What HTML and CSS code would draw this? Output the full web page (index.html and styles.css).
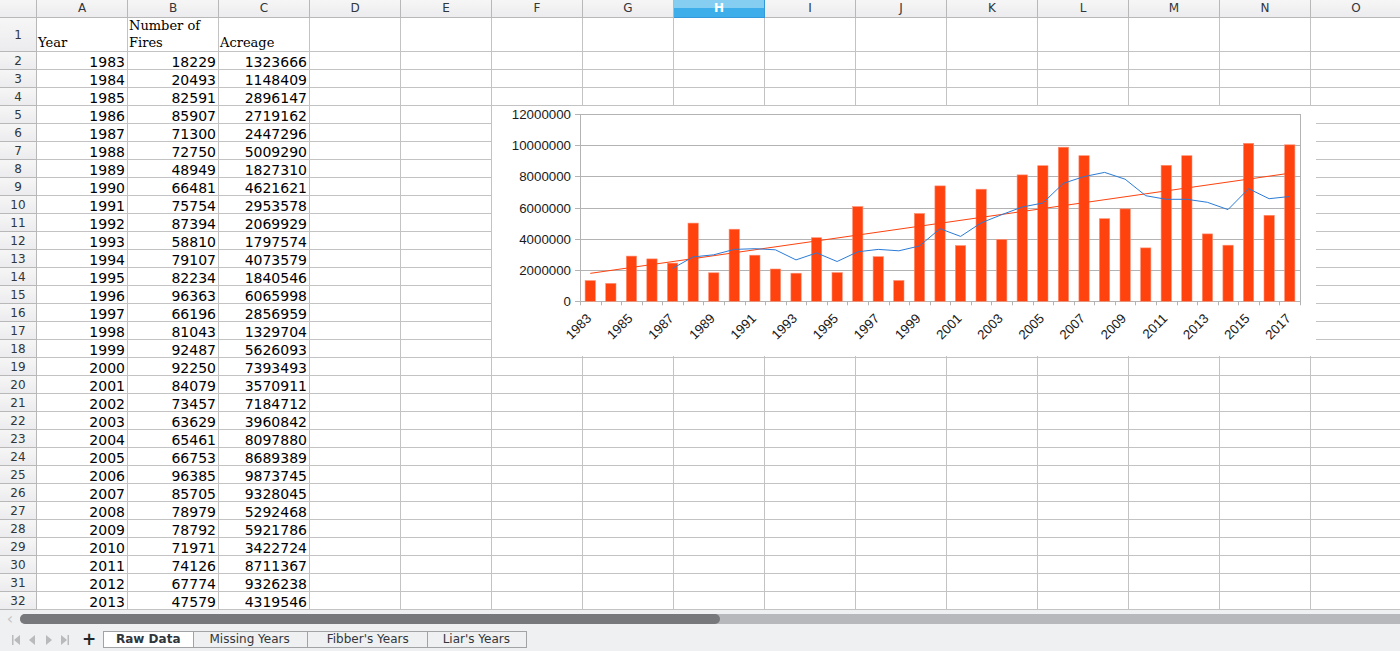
FILE: index.html
```html
<!DOCTYPE html>
<html>
<head>
	<title>Raw Data</title>
	<meta name="viewport" content="width=device-width, initial-scale=1">
	<link rel="stylesheet" href="styles.css">
</head>
<body>
	<div class="sheet">
		<div class="grid" id="grid"></div>
		<div class="chart" id="chart"></div>
	</div>

	<div class="hscroll">
		<span class="scroll-arrow">&lsaquo;</span>
		<div class="scroll-track"><div class="scroll-thumb"></div></div>
	</div>

	<div class="tabbar">
		<div class="tab-nav">
			<svg width="8" height="10" viewBox="0 0 8 10"><rect x="0" y="0" width="1.5" height="10"/><path d="M8 0 L2 5 L8 10 Z"/></svg>
			<svg width="7" height="10" viewBox="0 0 7 10"><path d="M6 0 L0 5 L6 10 Z"/></svg>
			<svg width="7" height="10" viewBox="0 0 7 10"><path d="M1 0 L7 5 L1 10 Z"/></svg>
			<svg width="8" height="10" viewBox="0 0 8 10"><path d="M0 0 L6 5 L0 10 Z"/><rect x="6.5" y="0" width="1.5" height="10"/></svg>
		</div>
		<span class="tab-add">+</span>
		<div class="tab active">Raw Data</div>
		<div class="tab">Missing Years</div>
		<div class="tab wide">Fibber's Years</div>
		<div class="tab narrow">Liar's Years</div>
	</div>

	<script src="script.js"></script>
</body>
</html>
```

FILE: styles.css
```css
body {
  margin: 0;
  width: 1400px;
  height: 651px;
  overflow: hidden;
  background: #ffffff;
  font-family: "DejaVu Sans", sans-serif;
}

/* spreadsheet area */
.sheet {
  position: relative;
  height: 610px;
  overflow: hidden;
}
.grid {
  display: grid;
  grid-template-columns: 37px repeat(15, 91px);
  grid-template-rows: 18px 34px repeat(31, 18px);
}
.cell {
  box-sizing: border-box;
  border-right: 1px solid #c3c3c3;
  border-bottom: 1px solid #c3c3c3;
  font-size: 14px;
  line-height: 16px;
  padding: 2px 2px 0 1px;
  text-align: right;
  white-space: nowrap;
  overflow: hidden;
  color: #000;
}
.corner,
.colhead,
.rowhead {
  background: linear-gradient(#f6f6f7, #ececee);
  border-color: #b8b8b8;
  color: #31363b;
  font-size: 12px;
  line-height: 17px;
  text-align: center;
  padding: 0;
}
.colhead.sel {
  background: linear-gradient(#86cdf2 50%, #3daee9 50%);
  border-color: #3498db;
  color: #ffffff;
  font-weight: bold;
}
.rowhead {
  display: flex;
  align-items: center;
  justify-content: center;
  padding-top: 1px;
}
.label {
  display: flex;
  align-items: flex-end;
  font-family: "DejaVu Serif", serif;
  font-size: 13px;
  line-height: 17px;
  text-align: left;
  white-space: normal;
  padding: 0 1px 0 1px;
}

/* chart object sits over the cells */
.chart {
  position: absolute;
  left: 492px;
  top: 106px;
  width: 824px;
  height: 250px;
  background: #ffffff;
}
.chart svg {
  display: block;
  font-family: "Liberation Sans", sans-serif;
  font-size: 13.3px;
}

/* horizontal scroll bar */
.hscroll {
  height: 18px;
  background: #eff0f1;
  display: flex;
  align-items: center;
}
.scroll-arrow {
  width: 20px;
  text-align: center;
  color: #c4c5c7;
  font-size: 16px;
  line-height: 18px;
}
.scroll-track {
  flex: 1;
  height: 10px;
  background: #b7b8bb;
  border-radius: 5px 0 0 5px;
}
.scroll-thumb {
  width: 700px;
  height: 10px;
  background: #76787c;
  border-radius: 5px;
}

/* sheet tabs */
.tabbar {
  height: 23px;
  background: #eff0f1;
  display: flex;
  align-items: flex-start;
  padding-top: 3px;
  box-sizing: border-box;
}
.tab-nav {
  display: flex;
  align-items: center;
  gap: 9px;
  padding: 4px 0 0 12px;
  fill: #b9babc;
}
.tab-add {
  width: 28px;
  margin-left: 6px;
  text-align: center;
  font-size: 17px;
  font-weight: bold;
  line-height: 17px;
  color: #232629;
}
.tab {
  height: 17px;
  box-sizing: border-box;
  border: 1px solid #a2a3a5;
  border-left: none;
  background: #eff0f1;
  color: #31363b;
  font-size: 12px;
  line-height: 15px;
  padding: 0 17px 0 16px;
}
.tab.wide {
  padding: 0 18px 0 19px;
}
.tab.narrow {
  padding: 0 16px 0 15px;
}
.tab.active {
  background: #ffffff;
  border-left: 1px solid #a2a3a5;
  font-weight: bold;
  padding: 0 12px;
}
```

FILE: script.js
```javascript
// year, number of fires, acreage
var data = [
  [1983, 18229, 1323666], [1984, 20493, 1148409], [1985, 82591, 2896147],
  [1986, 85907, 2719162], [1987, 71300, 2447296], [1988, 72750, 5009290],
  [1989, 48949, 1827310], [1990, 66481, 4621621], [1991, 75754, 2953578],
  [1992, 87394, 2069929], [1993, 58810, 1797574], [1994, 79107, 4073579],
  [1995, 82234, 1840546], [1996, 96363, 6065998], [1997, 66196, 2856959],
  [1998, 81043, 1329704], [1999, 92487, 5626093], [2000, 92250, 7393493],
  [2001, 84079, 3570911], [2002, 73457, 7184712], [2003, 63629, 3960842],
  [2004, 65461, 8097880], [2005, 66753, 8689389], [2006, 96385, 9873745],
  [2007, 85705, 9328045], [2008, 78979, 5292468], [2009, 78792, 5921786],
  [2010, 71971, 3422724], [2011, 74126, 8711367], [2012, 67774, 9326238],
  [2013, 47579, 4319546], [2014, 63312, 3595613], [2015, 68151, 10125149],
  [2016, 67743, 5509995], [2017, 71499, 10026086]
];

// build the cell grid
var grid = document.getElementById('grid');
var cols = 'ABCDEFGHIJKLMNO'.split('');

function cell(cls, text) {
  var d = document.createElement('div');
  d.className = 'cell ' + cls;
  d.textContent = text;
  grid.appendChild(d);
  return d;
}

cell('corner', '');
cols.forEach(function (c) {
  cell(c === 'H' ? 'colhead sel' : 'colhead', c);
});

cell('rowhead', '1');
cell('label', 'Year');
cell('label', 'Number of Fires');
cell('label', 'Acreage');
for (var k = 3; k < cols.length; k++) cell('', '');

for (var r = 0; r < 31; r++) {
  cell('rowhead', String(r + 2));
  cell('', data[r][0]);
  cell('', data[r][1]);
  cell('', data[r][2]);
  for (var k2 = 3; k2 < cols.length; k2++) cell('', '');
}

// chart
var x0 = 88, x1 = 808, yTop = 8, yBot = 195.3;
var n = data.length;
var cw = (x1 - x0) / n;
var barW = 10.3;

function yv(v) { return yBot - v / 12000000 * (yBot - yTop); }
function cx(i) { return x0 + (i + 0.5) * cw; }

var s = '<svg width="824" height="250" viewBox="0 0 824 250">';

// horizontal grid lines and y labels
for (var v = 0; v <= 12000000; v += 2000000) {
  var gy = Math.round(yv(v)) + 0.5;
  s += '<line x1="' + (x0 - 5) + '" y1="' + gy + '" x2="' + x1 + '" y2="' + gy + '" stroke="#b3b3b3" stroke-width="1"/>';
  s += '<text x="' + (x0 - 9) + '" y="' + (gy + 4.5) + '" text-anchor="end" fill="#1a1a1a">' + v + '</text>';
}
// axis lines
s += '<line x1="' + (x0 + 0.5) + '" y1="' + yTop + '" x2="' + (x0 + 0.5) + '" y2="' + (yBot + 4) + '" stroke="#b3b3b3"/>';
s += '<line x1="' + (x1 + 0.5) + '" y1="' + yTop + '" x2="' + (x1 + 0.5) + '" y2="' + (yBot + 4) + '" stroke="#b3b3b3"/>';
for (var t = 1; t < n; t++) {
  var tx = Math.round(x0 + t * cw) + 0.5;
  s += '<line x1="' + tx + '" y1="' + yBot + '" x2="' + tx + '" y2="' + (yBot + 4) + '" stroke="#b3b3b3"/>';
}

// bars
data.forEach(function (d, i) {
  var top = yv(d[2]);
  s += '<rect x="' + (cx(i) - barW / 2).toFixed(1) + '" y="' + top.toFixed(1) + '" width="' + barW + '" height="' + (yBot - top).toFixed(1) + '" fill="#ff420e" stroke="#ff8f72" stroke-width="0.6"/>';
});

// linear trend line
var sx = 0, sy = 0, sxy = 0, sxx = 0;
data.forEach(function (d, i) { sx += i; sy += d[2]; sxy += i * d[2]; sxx += i * i; });
var slope = (n * sxy - sx * sy) / (n * sxx - sx * sx);
var icpt = (sy - slope * sx) / n;
s += '<line x1="' + cx(0) + '" y1="' + yv(icpt) + '" x2="' + cx(n - 1) + '" y2="' + yv(icpt + slope * (n - 1)) + '" stroke="#ff420e" stroke-width="1"/>';

// 5 period moving average
var pts = [];
for (var i = 4; i < n; i++) {
  var sum = 0;
  for (var j = i - 4; j <= i; j++) sum += data[j][2];
  pts.push(cx(i).toFixed(1) + ',' + yv(sum / 5).toFixed(1));
}
s += '<polyline points="' + pts.join(' ') + '" fill="none" stroke="#2a7bd6" stroke-width="1"/>';

// rotated x labels
for (var l = 0; l < n; l += 2) {
  s += '<text transform="translate(' + (cx(l) + 2).toFixed(1) + ',' + (yBot + 18) + ') rotate(-45)" text-anchor="end" fill="#1a1a1a">' + data[l][0] + '</text>';
}

s += '</svg>';
document.getElementById('chart').innerHTML = s;
```
